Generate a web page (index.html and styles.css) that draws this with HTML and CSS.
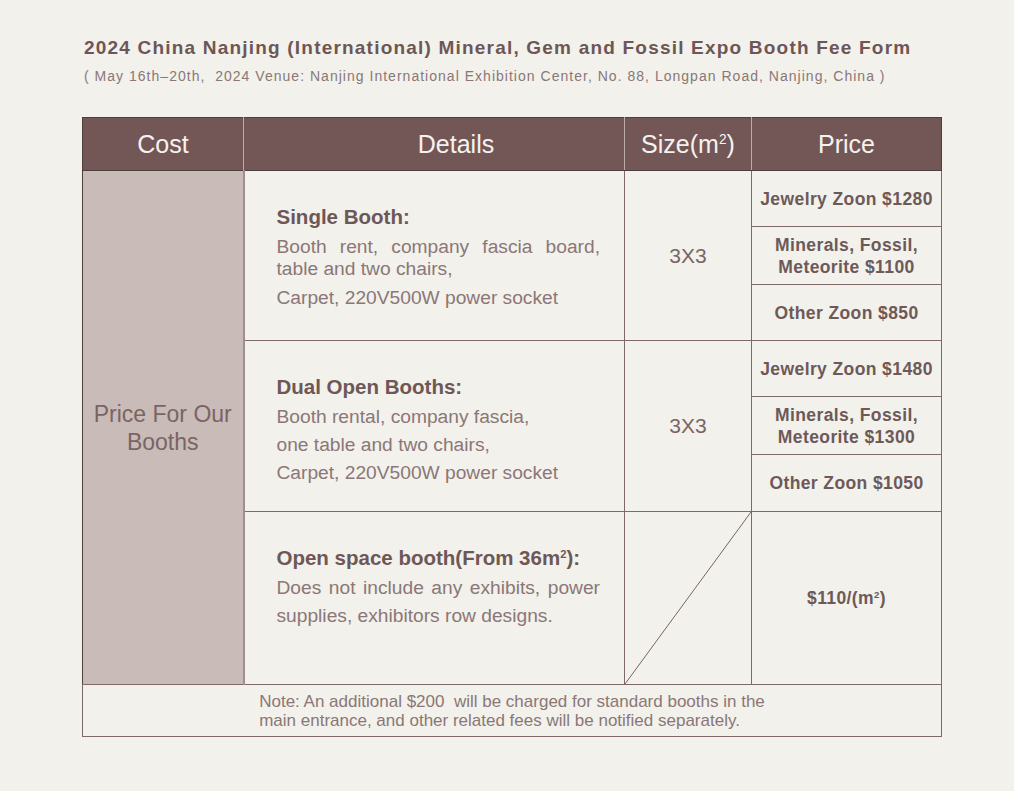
FILE: index.html
```html
<!DOCTYPE html>
<html lang="en">
<head>
<meta charset="utf-8">
<title>Booth Fee Form</title>
<link rel="stylesheet" href="styles.css">
</head>
<body>
<div class="page">
  <h1 class="title">2024 China Nanjing (International) Mineral, Gem and Fossil Expo Booth Fee Form</h1>
  <p class="subtitle">( May 16th–20th,&nbsp; 2024 Venue: Nanjing International Exhibition Center, No. 88, Longpan Road, Nanjing, China )</p>

  <table class="fees">
    <colgroup>
      <col class="c-cost">
      <col class="c-details">
      <col class="c-size">
      <col class="c-price">
    </colgroup>
    <thead>
      <tr class="head">
        <th>Cost</th>
        <th class="h-details">Details</th>
        <th>Size(m<sup>2</sup>)</th>
        <th>Price</th>
      </tr>
    </thead>
    <tbody>
      <tr class="r56">
        <td class="cost" rowspan="7">Price For Our<br>Booths</td>
        <td class="details" rowspan="3">
          <h2>Single Booth:</h2>
          <p class="just tight">Booth rent, company fascia board, table and two chairs,</p>
          <p class="gap">Carpet, 220V500W power socket</p>
        </td>
        <td class="size" rowspan="3">3X3</td>
        <td class="price">Jewelry Zoon $1280</td>
      </tr>
      <tr class="r58"><td class="price">Minerals, Fossil,<br>Meteorite $1100</td></tr>
      <tr class="r56"><td class="price">Other Zoon $850</td></tr>

      <tr class="r56">
        <td class="details" rowspan="3">
          <h2>Dual Open Booths:</h2>
          <p>Booth rental, company fascia,<br>one table and two chairs,<br>Carpet, 220V500W power socket</p>
        </td>
        <td class="size" rowspan="3">3X3</td>
        <td class="price">Jewelry Zoon $1480</td>
      </tr>
      <tr class="r58"><td class="price">Minerals, Fossil,<br>Meteorite $1300</td></tr>
      <tr class="r57"><td class="price">Other Zoon $1050</td></tr>

      <tr class="r173">
        <td class="details">
          <h2>Open space booth(From 36m<sup>2</sup>):</h2>
          <p class="just">Does not include any exhibits, power supplies, exhibitors row designs.</p>
        </td>
        <td class="size slash">
          <svg class="slash-svg" viewBox="0 0 100 100" preserveAspectRatio="none" aria-hidden="true">
            <line x1="0" y1="100" x2="100" y2="0" stroke="#7a6464" stroke-width="1" vector-effect="non-scaling-stroke"/>
          </svg>
        </td>
        <td class="price">$110/(m<sup>2</sup>)</td>
      </tr>
    </tbody>
    <tfoot>
      <tr class="note">
        <td colspan="4"><div class="note-text">Note: An additional $200&nbsp; will be charged for standard booths in the<br>main entrance, and other related fees will be notified separately.</div></td>
      </tr>
    </tfoot>
  </table>
</div>
</body>
</html>
```

FILE: styles.css
```css
* { box-sizing: border-box; }
html, body { margin: 0; padding: 0; background: #f2f1eb; }
body { font-family: "Liberation Sans", Arial, sans-serif; color: #6f5858; }

.page { padding: 37px 0 0 82px; width: 1014px; }

.title {
  margin: 0 0 0 2px;
  font-size: 19px;
  font-weight: bold;
  letter-spacing: 1.2px;
  color: #6e5656;
  line-height: 22px;
}
.subtitle {
  margin: 8px 0 0 2px;
  font-size: 14px;
  letter-spacing: 1.02px;
  color: #8a7777;
  line-height: 18px;
}

.fees {
  margin-top: 32px;
  border-collapse: collapse;
  table-layout: fixed;
  width: 859px;
  border: 1px solid #7b6666;
}
.c-cost { width: 161px; }
.c-details { width: 381px; }
.c-size { width: 127px; }
.c-price { width: 190px; }

.fees td { border: 1px solid #7e6868; padding: 0; }

.head th {
  background: #735757;
  color: #f6f2f0;
  font-weight: normal;
  font-size: 25px;
  height: 53px;
  padding: 0;
  border-top: 1px solid #4e3f3f;
  border-bottom: 1px solid #4e3f3f;
  border-left: 1px solid #b9aaaa;
  border-right: 1px solid #b9aaaa;
}
.head th.h-details { padding-left: 44px; }
.head th:first-child { border-left-color: #4e3f3f; }
.head th:last-child { border-right-color: #4e3f3f; }
sup { font-size: 0.55em; vertical-align: 0.65em; line-height: 0; }

.r56 { height: 56px; }
.r57 { height: 57px; }
.r58 { height: 58px; }
.r173 { height: 173px; }

.fees td.cost {
  background: #c9bbb8;
  color: #7a6464;
  font-size: 23px;
  line-height: 28px;
  text-align: center;
  border-right: 2px solid #a08e8e;
  border-left: 1px solid #4e3f3f;
}

.fees td.details {
  vertical-align: top;
  padding: 33px 24px 0 32px;
  color: #8b7777;
}
.details h2 {
  margin: 0 0 3px;
  font-size: 20.5px;
  line-height: 26px;
  font-weight: bold;
  color: #6e5757;
}
.details p {
  margin: 0;
  font-size: 19.2px;
  line-height: 28px;
}
.details p.just { text-align: justify; }
.details p.tight { line-height: 22px; margin-top: 6px; }
.details p.gap { margin-top: 4px; }

.size {
  text-align: center;
  font-size: 21px;
  color: #7a6464;
}
.fees td.slash { padding: 0; vertical-align: top; }
.slash-svg { display: block; width: 100%; height: 172px; }

.price {
  text-align: center;
  font-size: 17.5px;
  font-weight: bold;
  letter-spacing: 0.4px;
  line-height: 22px;
  color: #6e5959;
}

.note { height: 52px; }
.note td { text-align: center; }
.note-text {
  display: inline-block;
  text-align: left;
  font-size: 17px;
  line-height: 19px;
  color: #8b7777;
  padding-top: 1px;
}
```
